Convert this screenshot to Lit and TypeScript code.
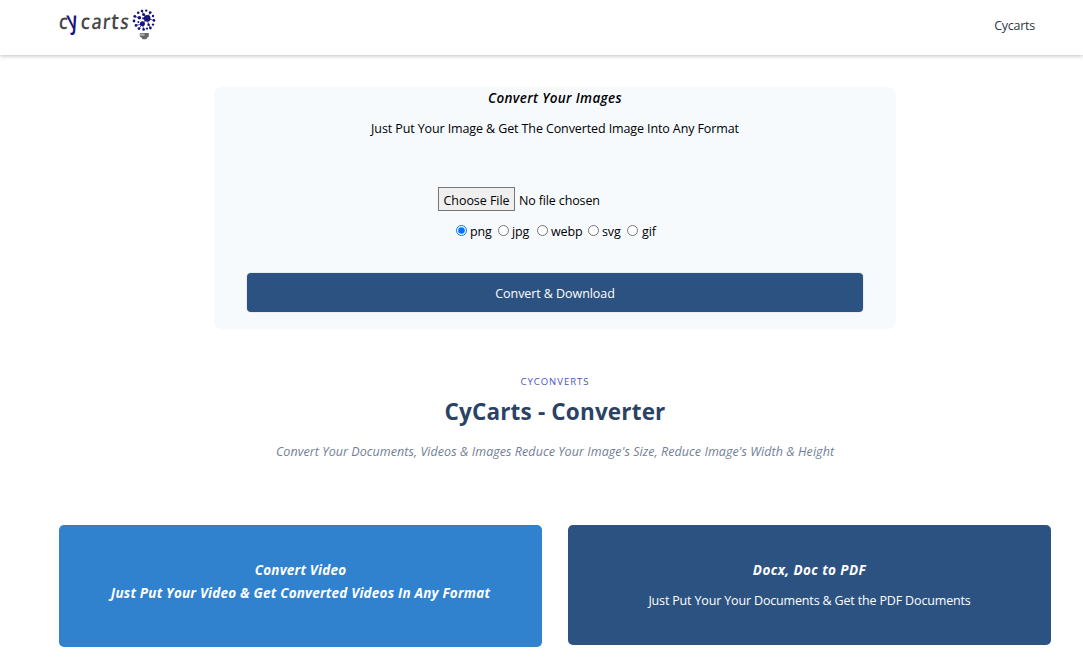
import { LitElement, html, css, svg } from "lit";

const FORMATS = ["png", "jpg", "webp", "svg", "gif"];

// Bulb dots: x, y, radius
const DOTS: [number, number, number][] = [
  [147.2, 18.4, 3.3], [142.4, 23.8, 2.5], [139.4, 17.8, 1.8], [148.6, 24.8, 1.3], [143.2, 18.4, 1.1],
  [138.2, 12.8, 1.3], [142, 11, 1.3], [146.2, 10.6, 1.2], [150.2, 12.6, 1.4], [143.6, 14.4, 1.5],
  [153, 16, 1.2], [154, 20.4, 1.3], [153, 24.6, 1.2], [150.4, 28, 1.4], [134.8, 16.4, 1.4],
  [134, 21, 1.4], [136, 25.4, 1.4], [139, 28.6, 1.4], [143.6, 29.4, 1.3], [147, 28.6, 1.1], [138.4, 22, 1],
];
const LINKS = "M147 18.4L142.4 23.8M147 18.4L150.2 12.6M147 18.4L154 20.4M147 18.4L148.6 24.8M142.4 23.8L139 28.6M142.4 23.8L143.6 29.4M147 18.4L143.6 14.4L142 11M139.4 17.8L134.8 16.4M142.4 23.8L136 25.4M148.6 24.8L150.4 28";

class AppLogo extends LitElement {
  static styles = css`
    :host { display: block; width: 100px; height: 50px; }
    svg { display: block; }
    .word { font: 600 21px "Open Sans", sans-serif; fill: #484848; }
    .blue { fill: #17127c; }
  `;
  render() {
    return html`<svg width="100" height="50" viewBox="58 0 100 50" role="img" aria-label="cycarts">
      <g class="word">
        <text transform="translate(58.6 28.8) skewX(-4) scale(.86 1)">c</text>
        <text class="blue" transform="translate(69 28.8) skewX(12) scale(.9 1.2)">y</text>
        <text transform="translate(80.3 28.8) skewX(-4) scale(.9 1)">c</text>
        <text transform="translate(91 28.8) skewX(-6) scale(.84 1)">a</text>
        <text transform="translate(102.2 28.8) skewX(-4) scale(.85 1)">r</text>
        <text transform="translate(110.6 28.8) skewX(-4) scale(.95 1.05)">t</text>
        <text transform="translate(119.6 28.8) skewX(-8) scale(.82 1)">s</text>
      </g>
      <path d=${LINKS} stroke="#17127c" stroke-width=".7" fill="none" />
      ${DOTS.map(([x, y, r]) => svg`<circle cx=${x} cy=${y} r=${r} fill="#17127c" />`)}
      <path d="M139.8 33h9v3.4l-1.4 1.2-1.2 1.6h-3.6l-1.2-1.6-1.6-1.2z" fill="#666" />
      <path d="M140 33.6h4.6v2.2h-4.6z" fill="#aaa" />
    </svg>`;
  }
}
customElements.define("app-logo", AppLogo);

class AppRoot extends LitElement {
  static styles = css`
    :host {
      display: block; height: 665px; overflow: hidden; background: #fff; color: #000;
      font: 12.5px/20px "Open Sans", "Noto Sans", sans-serif;
    }
    * { box-sizing: border-box; }
    h1, h2, h3, p { margin: 0; white-space: nowrap; }
    header {
      height: 55px; padding: 0 48px 0 58px; display: flex; justify-content: space-between;
      box-shadow: 0 1px 4px rgba(0,0,0,.25);
    }
    .nav { margin-top: 16px; color: #2d3748; letter-spacing: -.25px; text-decoration: none; }
    .panel {
      width: 682px; height: 242px; margin: 32px 0 0 214px; padding: 1px 33px 0;
      background: #f6fafd; border-radius: 8px; text-align: center;
    }
    .panel h3 { font: italic 600 13.5px/20px "Open Sans", sans-serif; letter-spacing: .33px; }
    .panel .lead { margin-top: 11px; letter-spacing: -.11px; }
    .file {
      display: block; width: 234px; height: 24px; margin: 48px 0 0 191px; padding: 0;
      font: inherit; line-height: 22px; letter-spacing: -.14px; color: #000;
    }
    .file::file-selector-button {
      width: 77px; height: 24px; padding: 2px 0 0; margin: 0 4px 0 0; border: 1px solid #767676;
      border-radius: 0; background: #efefef; font: inherit; letter-spacing: -.05px; color: #000;
    }
    .formats {
      display: grid; grid-template-columns: 42px 39px 51px 39px auto; justify-content: start;
      margin: 11px 0 0 210px;
    }
    .formats label { display: flex; align-items: center; gap: 3px; letter-spacing: -.15px; }
    .formats input { width: 11px; height: 11px; margin: 0 0 3px -1px; }
    .formats label:last-child { gap: 4px; }
    .convert {
      display: block; width: 616px; height: 39px; margin-top: 31px; padding: 3px 0 0; border: 0;
      border-radius: 4px; background: #2c5282; color: #fff; font: inherit; letter-spacing: -.07px;
      box-shadow: 0 0 0 1px rgba(0,0,0,.05);
    }
    .intro { margin: 45px 0 0; padding-left: 27px; text-align: center; }
    .eyebrow { font-size: 9.5px; line-height: 16px; letter-spacing: 1px; color: #4c51bf; }
    .intro h1 { margin-top: 7px; font-size: 22.5px; line-height: 30px; font-weight: 700; letter-spacing: .17px; color: #2a4365; }
    .intro .desc { margin-top: 15px; font-style: italic; letter-spacing: .06px; color: #718096; }
    .cards { display: grid; grid-template-columns: 483px 483px; gap: 26px; align-items: start; margin: 63px 0 0 59px; }
    .card { padding-top: 35px; border-radius: 5px; color: #fff; text-align: center; }
    .card h2 { font: italic 700 13.5px/20px "Open Sans", sans-serif; letter-spacing: .2px; }
    .video { height: 122px; background: #3182ce; }
    .video h2 + h2 { margin-top: 3px; }
    .docs { height: 120px; background: #2c5282; }
    .docs h2 { letter-spacing: .42px; }
    .docs p { margin-top: 11px; letter-spacing: -.16px; }
  `;
  render() {
    return html`
      <header><app-logo></app-logo><a class="nav">Cycarts</a></header>
      <section class="panel">
        <h3>Convert Your Images</h3>
        <p class="lead">Just Put Your Image &amp; Get The Converted Image Into Any Format</p>
        <input class="file" type="file" />
        <div class="formats">
          ${FORMATS.map((f, i) => html`<label><input type="radio" name="format" .checked=${i === 0} />${f}</label>`)}
        </div>
        <button class="convert">Convert &amp; Download</button>
      </section>
      <section class="intro">
        <p class="eyebrow">CYCONVERTS</p>
        <h1>CyCarts - Converter</h1>
        <p class="desc">Convert Your Documents, Videos &amp; Images Reduce Your Image's Size, Reduce Image's Width &amp; Height</p>
      </section>
      <section class="cards">
        <div class="card video"><h2>Convert Video</h2><h2>Just Put Your Video &amp; Get Converted Videos In Any Format</h2></div>
        <div class="card docs"><h2>Docx, Doc to PDF</h2><p>Just Put Your Your Documents &amp; Get the PDF Documents</p></div>
      </section>`;
  }
}
customElements.define("app-root", AppRoot);
